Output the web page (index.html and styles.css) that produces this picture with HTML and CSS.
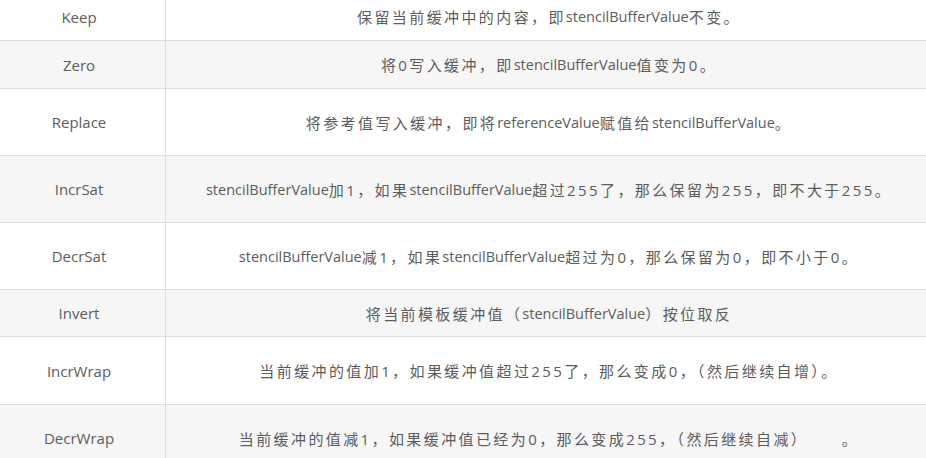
FILE: index.html
```html
<!DOCTYPE html>
<html lang="zh-CN">
<head>
<meta charset="utf-8">
<title>Stencil Operations</title>
<link rel="stylesheet" href="styles.css">
</head>
<body>
<div class="table">
  <div class="row h48">
    <div class="key">Keep</div>
    <div class="desc">保留当前缓冲中的内容，即<span class="en">stencilBufferValue</span>不变。</div>
  </div>
  <div class="row alt h48">
    <div class="key">Zero</div>
    <div class="desc">将0写入缓冲，即<span class="en">stencilBufferValue</span>值变为0。</div>
  </div>
  <div class="row h67">
    <div class="key">Replace</div>
    <div class="desc">将参考值写入缓冲，即将<span class="en">referenceValue</span>赋值给<span class="en">stencilBufferValue</span>。</div>
  </div>
  <div class="row alt h67">
    <div class="key">IncrSat</div>
    <div class="desc"><span class="en">stencilBufferValue</span>加1，如果<span class="en">stencilBufferValue</span>超过255了，那么保留为255，即不大于255。</div>
  </div>
  <div class="row h67">
    <div class="key">DecrSat</div>
    <div class="desc"><span class="en">stencilBufferValue</span>减1，如果<span class="en">stencilBufferValue</span>超过为0，那么保留为0，即不小于0。</div>
  </div>
  <div class="row alt h47">
    <div class="key">Invert</div>
    <div class="desc">将当前模板缓冲值（<span class="en">stencilBufferValue</span>）按位取反</div>
  </div>
  <div class="row h68">
    <div class="key">IncrWrap</div>
    <div class="desc">当前缓冲的值加1，如果缓冲值超过255了，那么变成0，（然后继续自增）。</div>
  </div>
  <div class="row alt h67">
    <div class="key">DecrWrap</div>
    <div class="desc">当前缓冲的值减1，如果缓冲值已经为0，那么变成255，（然后继续自减）　　 。</div>
  </div>
</div>
</body>
</html>
```
FILE: styles.css
```css
* {
  box-sizing: border-box;
}

html, body {
  margin: 0;
  padding: 0;
  background: #ffffff;
  overflow: hidden;
}

body {
  font-family: "Open Sans", "Noto Sans CJK SC", sans-serif;
  font-size: 15px;
  color: #5c5c5c;
}

.table {
  margin-top: -7px;
  width: 100%;
}

.row {
  display: grid;
  grid-template-columns: 166px 1fr;
  border-bottom: 1px solid #dddddd;
  background: #ffffff;
}

.row.alt {
  background: #f6f6f6;
}

.h47 { height: 47px; }
.h48 { height: 48px; }
.h67 { height: 67px; }
.h68 { height: 68px; }

.key {
  display: flex;
  align-items: center;
  justify-content: center;
  padding-right: 7px;
  border-right: 1px solid #dddddd;
  white-space: nowrap;
}

.desc {
  display: flex;
  align-items: center;
  justify-content: center;
  padding-left: 6px;
  letter-spacing: 2.4px;
  white-space: pre;
}

.en {
  letter-spacing: 0;
  font-size: 14.5px;
}
```
